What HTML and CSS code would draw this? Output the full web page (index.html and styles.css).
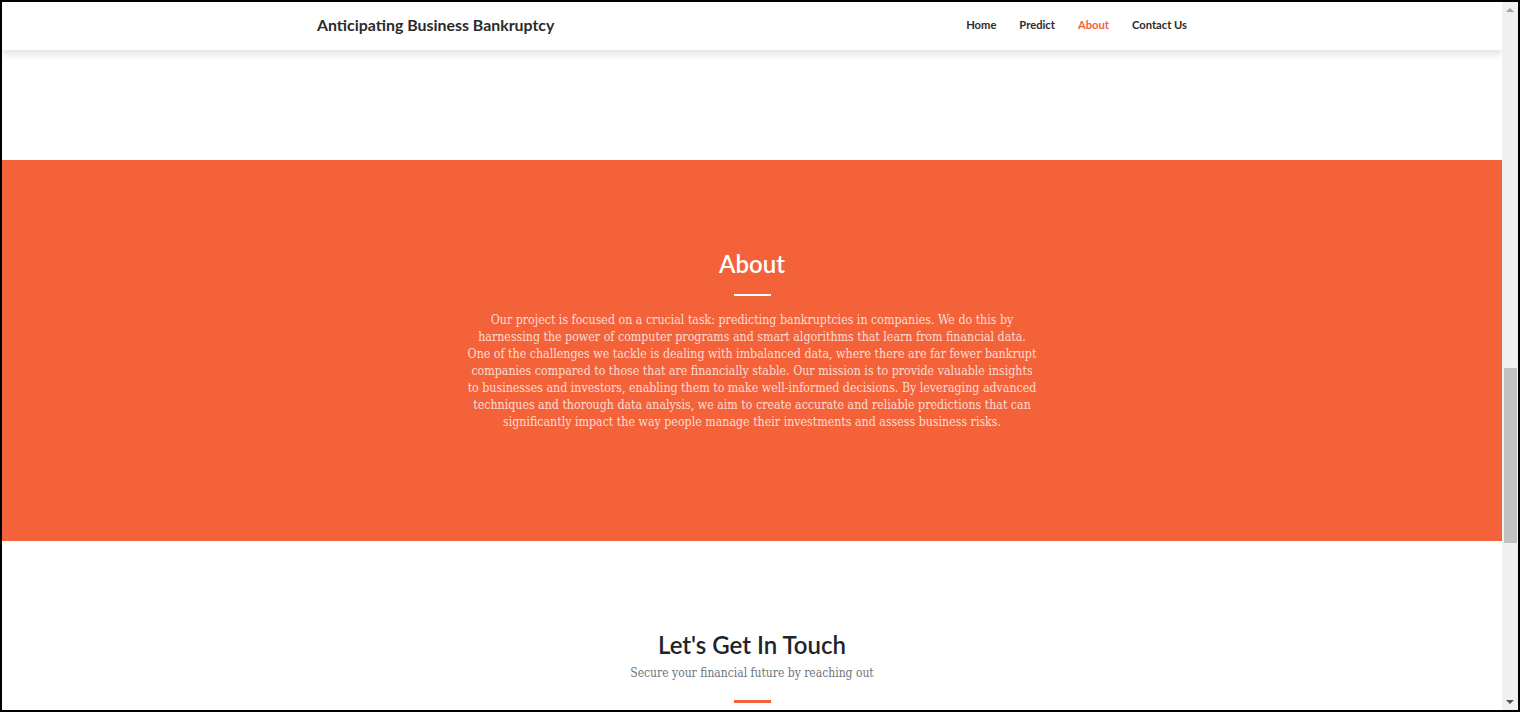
FILE: index.html
```html
<!DOCTYPE html>
<html lang="en">
<head>
<meta charset="utf-8">
<title>Anticipating Business Bankruptcy</title>
<link rel="stylesheet" href="styles.css">
</head>
<body>
<div class="frame">
  <div class="viewport">
    <header class="navbar">
      <div class="container nav-inner">
        <a class="brand" href="#">Anticipating Business Bankruptcy</a>
        <nav class="nav-links">
          <a href="#">Home</a>
          <a href="#">Predict</a>
          <a href="#" class="active">About</a>
          <a href="#">Contact Us</a>
        </nav>
      </div>
    </header>
    <div class="prev-section"></div>
    <section class="about">
      <h2 class="section-title light">About</h2>
      <hr class="divider light">
      <p class="about-text">Our project is focused on a crucial task: predicting bankruptcies in companies. We do this by harnessing the power of computer programs and smart algorithms that learn from financial data. One of the challenges we tackle is dealing with imbalanced data, where there are far fewer bankrupt companies compared to those that are financially stable. Our mission is to provide valuable insights to businesses and investors, enabling them to make well-informed decisions. By leveraging advanced techniques and thorough data analysis, we aim to create accurate and reliable predictions that can significantly impact the way people manage their investments and assess business risks.</p>
    </section>
    <section class="contact">
      <h2 class="section-title">Let's Get In Touch</h2>
      <p class="contact-sub">Secure your financial future by reaching out</p>
      <hr class="divider">
    </section>
  </div>
  <div class="scrollbar">
    <div class="arrow up"></div>
    <div class="track"><div class="thumb"></div></div>
    <div class="arrow down"></div>
  </div>
</div>
</body>
</html>
```

FILE: styles.css
```css
* { box-sizing: border-box; }
html, body { margin: 0; padding: 0; background: #fff; }
body { width: 1520px; height: 712px; overflow: hidden; }

.frame {
  width: 1520px;
  height: 712px;
  border: 2px solid #000;
  display: flex;
  overflow: hidden;
}
.viewport {
  flex: 1;
  overflow: hidden;
  background: #fff;
  position: relative;
}

.navbar {
  height: 48px;
  padding-bottom: 4px;
  background: #fff;
  box-shadow: 0 4px 8px rgba(0,0,0,0.12);
  position: relative;
  z-index: 2;
}
.container { width: 870px; margin: 0 auto; }
.nav-inner {
  height: 100%;
  display: flex;
  align-items: center;
  justify-content: space-between;
}
.brand {
  font-family: Lato, "Open Sans", sans-serif;
  font-weight: 700;
  font-size: 15.9px;
  color: #2b2b2b;
  text-decoration: none;
}
.nav-links { display: flex; gap: 23px; }
.nav-links a {
  font-family: Lato, "Open Sans", sans-serif;
  font-weight: 700;
  font-size: 11.2px;
  color: #2b2b2b;
  text-decoration: none;
}
.nav-links a.active { color: #f4623a; }

.prev-section { height: 110px; }

.about {
  height: 381px;
  background: #f4623a;
  padding-top: 88px;
  text-align: center;
}
.section-title {
  margin: 0;
  font-family: Lato, "Open Sans", sans-serif;
  font-weight: 600;
  font-size: 24px;
  line-height: 31px;
  color: #212529;
}
.section-title.light { color: #fff; }
.divider {
  width: 37px;
  height: 3px;
  border: 0;
  background: #f4623a;
  margin: 0 auto;
  opacity: 1;
}
.divider.light { height: 2px; background: #fff; margin-top: 15px; }
.about-text {
  width: 571px;
  margin: 16px auto 0;
  font-family: "DejaVu Serif Condensed", "DejaVu Serif", serif;
  font-size: 12.3px;
  line-height: 17px;
  color: rgba(255,255,255,0.78);
}

.contact {
  padding-top: 88px;
  text-align: center;
}
.contact-sub {
  margin: 4px 0 0;
  font-family: "DejaVu Serif Condensed", "DejaVu Serif", serif;
  font-size: 12px;
  line-height: 18px;
  color: #6c757d;
}
.contact .divider { margin-top: 18px; }

.scrollbar {
  width: 16px;
  background: #f0f0f0;
  display: flex;
  flex-direction: column;
}
.arrow { height: 16px; display: flex; align-items: center; justify-content: center; }
.arrow::before {
  content: "";
  width: 0; height: 0;
  border-left: 4px solid transparent;
  border-right: 4px solid transparent;
}
.arrow.up::before { border-bottom: 4px solid #a3a3a3; }
.arrow.down::before { border-top: 4px solid #505050; }
.track { flex: 1; position: relative; }
.thumb {
  position: absolute;
  left: 2px; right: 1px;
  top: 350px;
  height: 175px;
  background: #c1c1c1;
}
```
